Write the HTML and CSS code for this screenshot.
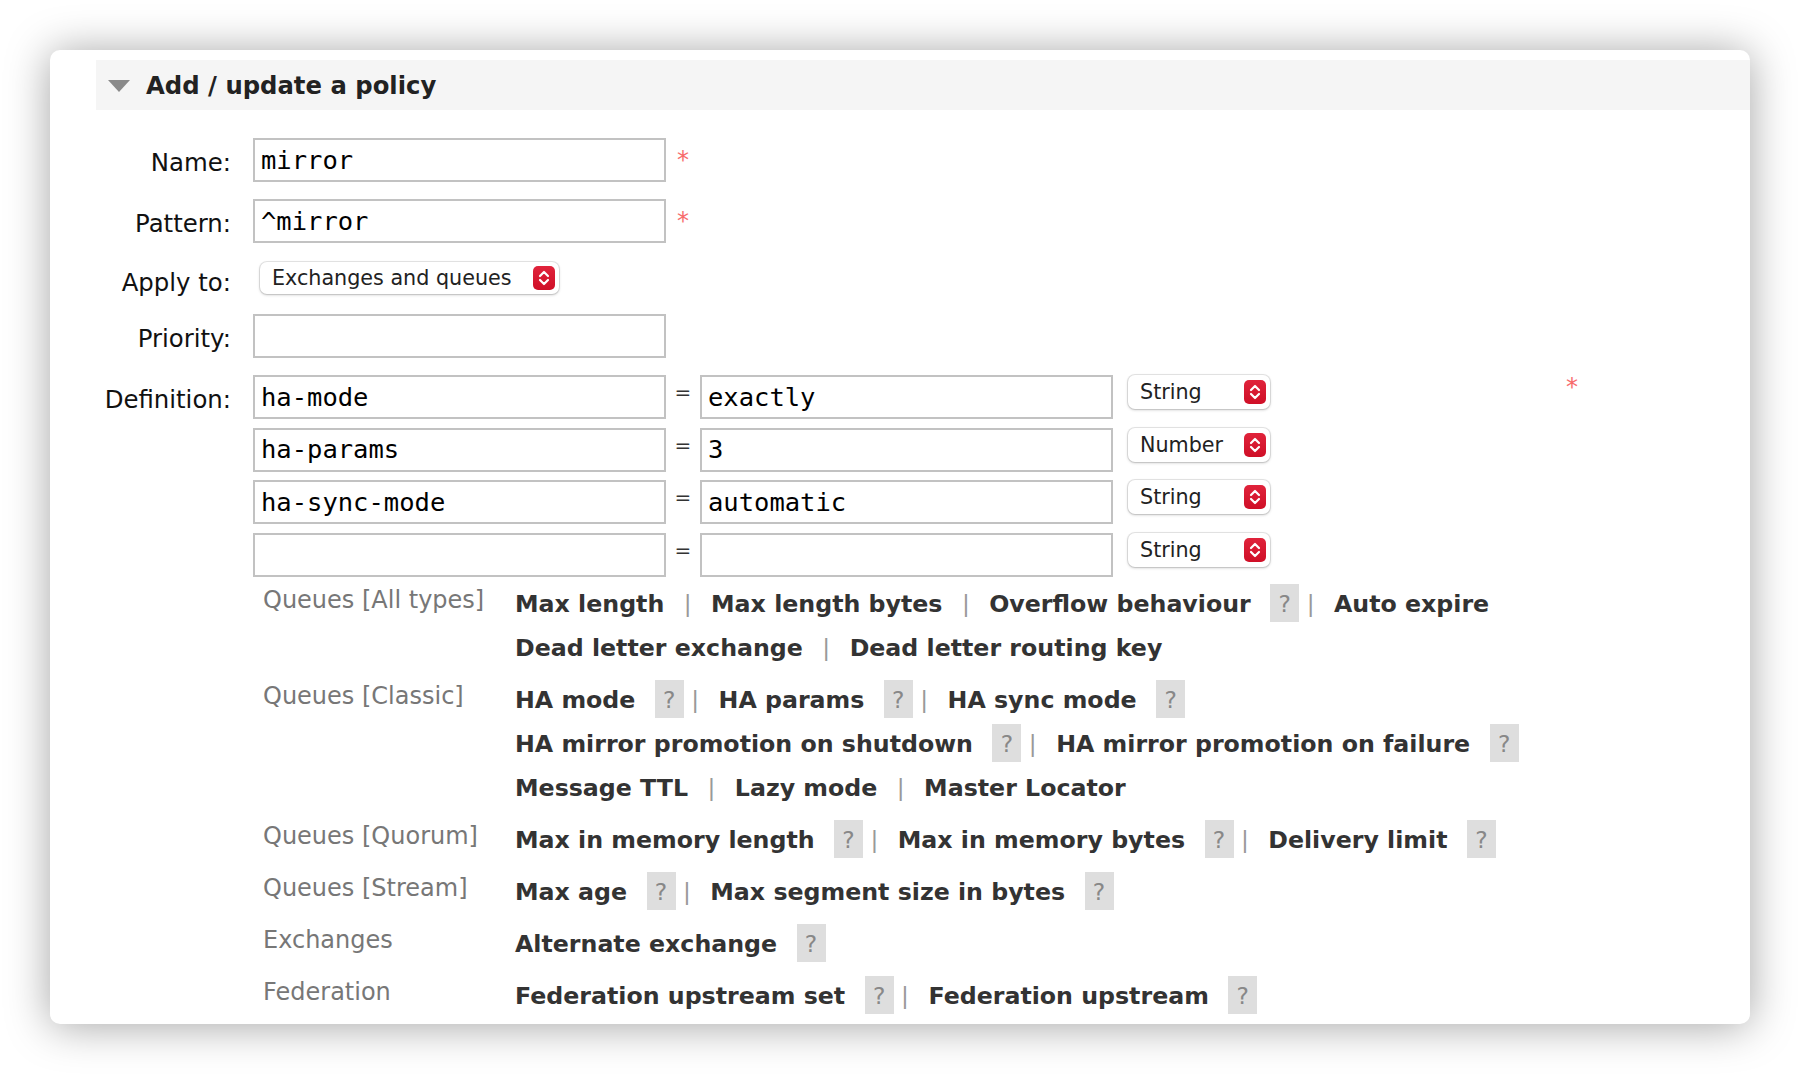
FILE: index.html
```html
<!DOCTYPE html>
<html lang="en">
<head>
<meta charset="utf-8">
<title>Add / update a policy</title>
<link rel="stylesheet" href="styles.css">
</head>
<body>
<div class="card">
  <div class="hdr">
    <span class="tri"></span>
    <h2 class="title">Add / update a policy</h2>
  </div>

  <div class="form">
    <div class="row r-name">
      <label class="lbl">Name:</label>
      <input class="text" type="text" value="mirror"><span class="mand">*</span>
    </div>
    <div class="row r-pattern">
      <label class="lbl">Pattern:</label>
      <input class="text" type="text" value="^mirror"><span class="mand">*</span>
    </div>
    <div class="row r-apply">
      <label class="lbl lbl-apply">Apply to:</label>
      <div class="sel sel-apply"><span class="sel-text">Exchanges and queues</span><span class="arrows"><svg viewBox="0 0 22 24" width="22" height="24"><path d="M7 10 L11 6 L15 10 M7 14 L11 18 L15 14" fill="none" stroke="#fff" stroke-width="2.2" stroke-linecap="round" stroke-linejoin="round"/></svg></span></div>
    </div>
    <div class="row r-prio">
      <label class="lbl">Priority:</label>
      <input class="text" type="text" value="">
    </div>
    <div class="row r-def">
      <label class="lbl">Definition:</label>
      <div class="defs">
        <div class="defrow">
          <input class="text" type="text" value="ha-mode"><span class="eq">=</span><input class="text" type="text" value="exactly">
          <div class="sel sel-type"><span class="sel-text">String</span><span class="arrows"><svg viewBox="0 0 22 24" width="22" height="24"><path d="M7 10 L11 6 L15 10 M7 14 L11 18 L15 14" fill="none" stroke="#fff" stroke-width="2.2" stroke-linecap="round" stroke-linejoin="round"/></svg></span></div>
          <span class="mand mand-def">*</span>
        </div>
        <div class="defrow">
          <input class="text" type="text" value="ha-params"><span class="eq">=</span><input class="text" type="text" value="3">
          <div class="sel sel-type"><span class="sel-text">Number</span><span class="arrows"><svg viewBox="0 0 22 24" width="22" height="24"><path d="M7 10 L11 6 L15 10 M7 14 L11 18 L15 14" fill="none" stroke="#fff" stroke-width="2.2" stroke-linecap="round" stroke-linejoin="round"/></svg></span></div>
        </div>
        <div class="defrow">
          <input class="text" type="text" value="ha-sync-mode"><span class="eq">=</span><input class="text" type="text" value="automatic">
          <div class="sel sel-type"><span class="sel-text">String</span><span class="arrows"><svg viewBox="0 0 22 24" width="22" height="24"><path d="M7 10 L11 6 L15 10 M7 14 L11 18 L15 14" fill="none" stroke="#fff" stroke-width="2.2" stroke-linecap="round" stroke-linejoin="round"/></svg></span></div>
        </div>
        <div class="defrow">
          <input class="text" type="text" value=""><span class="eq">=</span><input class="text" type="text" value="">
          <div class="sel sel-type"><span class="sel-text">String</span><span class="arrows"><svg viewBox="0 0 22 24" width="22" height="24"><path d="M7 10 L11 6 L15 10 M7 14 L11 18 L15 14" fill="none" stroke="#fff" stroke-width="2.2" stroke-linecap="round" stroke-linejoin="round"/></svg></span></div>
        </div>
      </div>
    </div>

    <div class="links">
      <div class="grp">Queues [All types]</div>
      <div class="lnk"><span class="lk">Max length</span> | <span class="lk">Max length bytes</span> | <span class="lk">Overflow behaviour</span> <span class="help">?</span> | <span class="lk">Auto expire</span><br><span class="lk">Dead letter exchange</span> | <span class="lk">Dead letter routing key</span></div>

      <div class="grp">Queues [Classic]</div>
      <div class="lnk"><span class="lk">HA mode</span> <span class="help">?</span> | <span class="lk">HA params</span> <span class="help">?</span> | <span class="lk">HA sync mode</span> <span class="help">?</span><br><span class="lk">HA mirror promotion on shutdown</span> <span class="help">?</span> | <span class="lk">HA mirror promotion on failure</span> <span class="help">?</span><br><span class="lk">Message TTL</span> | <span class="lk">Lazy mode</span> | <span class="lk">Master Locator</span></div>

      <div class="grp">Queues [Quorum]</div>
      <div class="lnk"><span class="lk">Max in memory length</span> <span class="help">?</span> | <span class="lk">Max in memory bytes</span> <span class="help">?</span> | <span class="lk">Delivery limit</span> <span class="help">?</span></div>

      <div class="grp">Queues [Stream]</div>
      <div class="lnk"><span class="lk">Max age</span> <span class="help">?</span> | <span class="lk">Max segment size in bytes</span> <span class="help">?</span></div>

      <div class="grp">Exchanges</div>
      <div class="lnk"><span class="lk">Alternate exchange</span> <span class="help">?</span></div>

      <div class="grp">Federation</div>
      <div class="lnk"><span class="lk">Federation upstream set</span> <span class="help">?</span> | <span class="lk">Federation upstream</span> <span class="help">?</span></div>
    </div>
  </div>
</div>
</body>
</html>
```
FILE: styles.css
```css
* { box-sizing: border-box; }
html, body { margin: 0; padding: 0; background: #fff; }
body {
  padding: 50px;
  overflow: hidden;
  font-family: "DejaVu Sans", Verdana, sans-serif;
  color: #111;
}
.card {
  width: 1700px;
  height: 974px;
  background: #fff;
  border-radius: 10px;
  box-shadow: 0 2px 44px rgba(0, 0, 0, 0.36);
  padding: 10px 0 0 46px;
  overflow: hidden;
}
.hdr {
  height: 50px;
  background: #f5f5f5;
  display: flex;
  align-items: center;
  padding-left: 12px;
}
.tri {
  width: 0;
  height: 0;
  border-left: 11px solid transparent;
  border-right: 11px solid transparent;
  border-top: 12px solid #8a8a8a;
  margin-right: 16px;
  margin-top: 2px;
}
.title {
  margin: 0;
  font-size: 24.3px;
  font-weight: bold;
  color: #222;
  line-height: 50px;
  padding-top: 2px;
}
.form { padding-top: 28px; }
.row { display: flex; align-items: flex-start; height: 44px; }
.r-name { margin-bottom: 17px; }
.r-pattern { margin-bottom: 19px; }
.r-apply { height: 32px; margin-bottom: 20px; }
.r-prio { margin-bottom: 17px; }
.r-def { height: auto; }
.lbl {
  width: 135px;
  flex: none;
  margin-right: 22px;
  text-align: right;
  font-size: 24.4px;
  line-height: 44px;
  padding-top: 3px;
  color: #111;
  white-space: nowrap;
}
.lbl-apply { line-height: 32px; padding-top: 5px; }
.text {
  width: 413px;
  height: 44px;
  flex: none;
  margin: 0;
  border: 2px solid #c2c2c2;
  border-radius: 0;
  padding: 0 6px 1px 6px;
  font-family: "DejaVu Sans Mono", "Liberation Mono", monospace;
  font-size: 25.5px;
  color: #000;
  background: #fff;
  outline: none;
}
.mand {
  color: #f76b6b;
  font-size: 24px;
  line-height: 44px;
  margin-left: 11px;
}
.mand-def { line-height: 24px; margin-left: 296px; }
.sel {
  flex: none;
  display: flex;
  align-items: center;
  justify-content: space-between;
  background: #fff;
  border-radius: 7px;
  box-shadow: 0 0 0 1px rgba(0, 0, 0, 0.09), 0 1px 3px rgba(0, 0, 0, 0.22);
  padding: 0 4px 0 12px;
  font-size: 20.7px;
  color: #222;
}
.sel-apply { width: 299px; height: 32px; margin-left: 7px; }
.sel-type { width: 142px; height: 34px; margin-left: 15px; }
.arrows {
  width: 22px;
  height: 24px;
  border-radius: 5px;
  background: linear-gradient(#e0233b, #cf0f27);
  display: flex;
}
.arrows svg { display: block; }
.defs { display: flex; flex-direction: column; }
.defrow { display: flex; align-items: flex-start; height: 44px; margin-bottom: 8.67px; }
.defrow:last-child { margin-bottom: 0; }
.eq {
  width: 34px;
  flex: none;
  text-align: center;
  font-size: 20px;
  line-height: 34px;
  color: #333;
}
.links {
  display: grid;
  grid-template-columns: 240px auto;
  margin: 1px 0 0 167px;
  font-size: 23.4px;
  line-height: 44px;
}
.grp {
  padding: 0 0 8px;
  font-size: 24px;
  color: #777;
  white-space: nowrap;
}
.lnk {
  padding: 4px 0;
  color: #999;
  white-space: nowrap;
}
.lk {
  color: #333;
  font-weight: bold;
  font-size: 23.7px;
  margin: 0 12px;
}
.help {
  display: inline-block;
  background: #dedede;
  color: #888;
  width: 29px;
  height: 38px;
  text-align: center;
  padding-top: 5px;
  line-height: 31px;
}
```
